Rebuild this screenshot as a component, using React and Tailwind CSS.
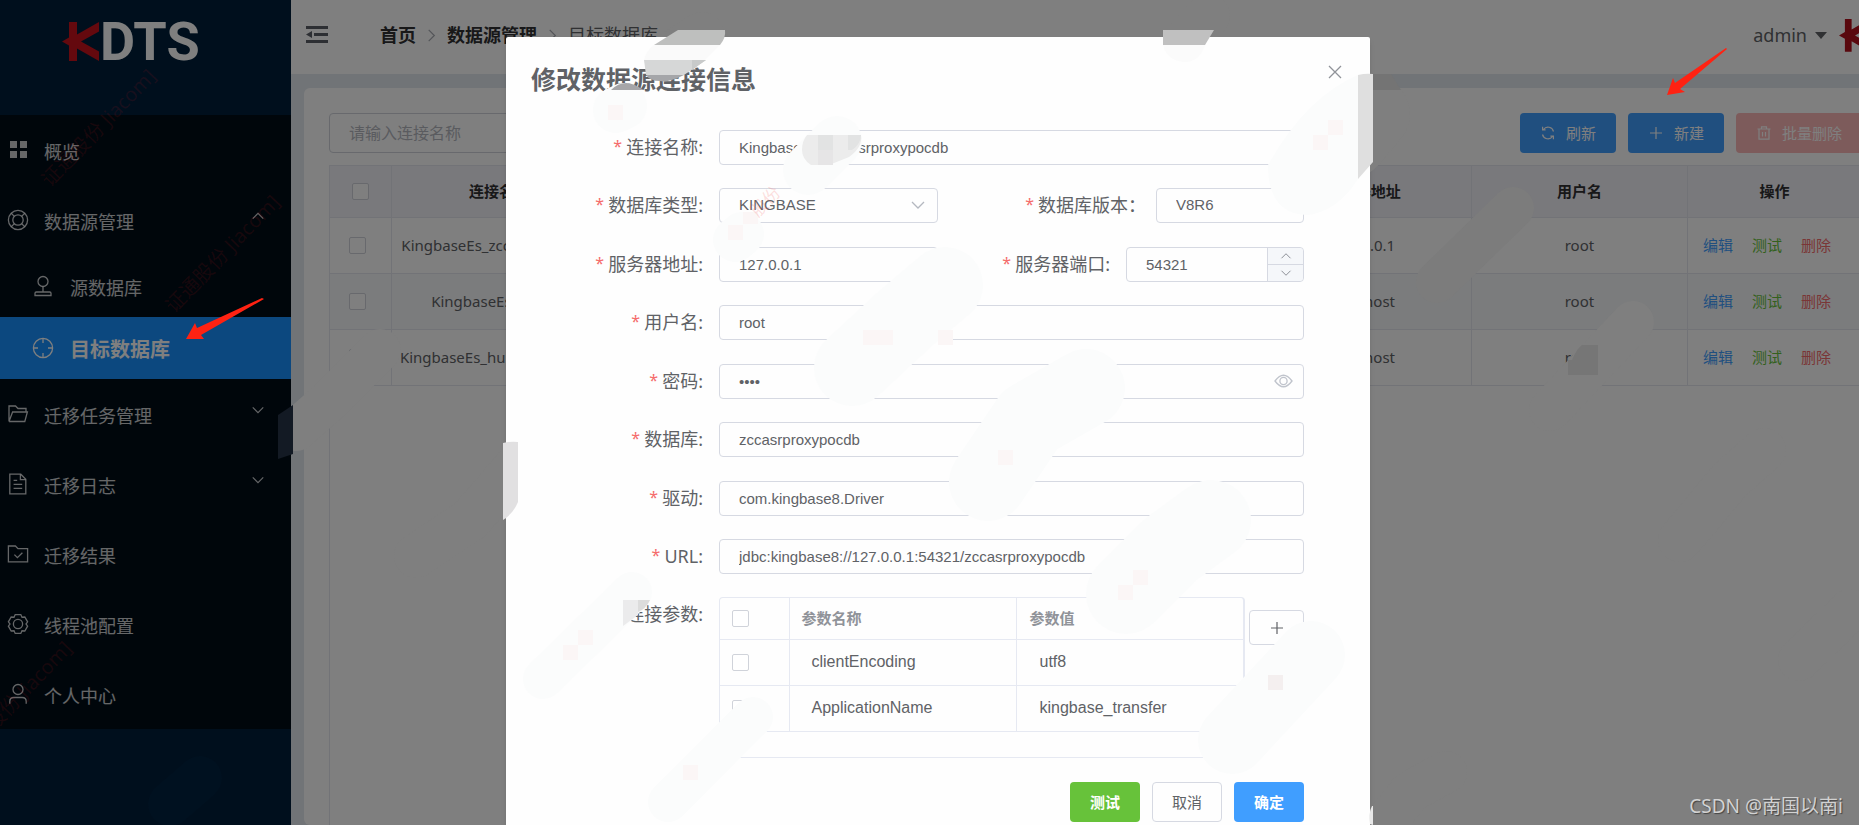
import React, { useState } from 'react';

const FONT_UI = 'font-["Noto_Sans","Noto_Sans_CJK_SC",sans-serif]';
const FONT_INPUT = 'font-["Liberation_Sans","Noto_Sans_CJK_SC",sans-serif]';

const MENU = [
  { label: '概览', icon: 'grid' },
  {
    label: '数据源管理',
    icon: 'buoy',
    arrow: 'up',
    children: [
      { label: '源数据库', icon: 'stamp' },
      { label: '目标数据库', icon: 'aim', active: true },
    ],
  },
  { label: '迁移任务管理', icon: 'folder', arrow: 'down' },
  { label: '迁移日志', icon: 'doc', arrow: 'down' },
  { label: '迁移结果', icon: 'check' },
  { label: '线程池配置', icon: 'gear' },
  { label: '个人中心', icon: 'user' },
];

const CONNECTIONS = [
  { name: 'KingbaseEs_zccasrproxypoc', host: '127.0.0.1', user: 'root' },
  { name: 'KingbaseEs_hr_test', host: 'localhost', user: 'root' },
  { name: 'KingbaseEs_hubproxypocdb', host: 'localhost', user: 'root' },
];

const PARAMS = [
  { name: 'clientEncoding', value: 'utf8' },
  { name: 'ApplicationName', value: 'kingbase_transfer' },
];

const ICON_SHAPES = {
  grid: (
    <g fill="currentColor" stroke="none">
      <rect x="3" y="2" width="7" height="7" />
      <rect x="13" y="2" width="7" height="7" />
      <rect x="3" y="12" width="7" height="7" />
      <rect x="13" y="12" width="7" height="7" />
    </g>
  ),
  buoy: (
    <>
      <circle cx="11" cy="11" r="9.6" />
      <circle cx="11" cy="11" r="5.2" />
      <path d="M4.2 4.2 7.4 7.4M17.8 4.2 14.6 7.4M4.2 17.8 7.4 14.6M17.8 17.8 14.6 14.6" />
    </>
  ),
  stamp: (
    <>
      <circle cx="11" cy="6.5" r="5" />
      <path d="M11 11.5V17M3 20.5v-2.2q0-1.3 1.3-1.3h13.4q1.3 0 1.3 1.3v2.2z" />
    </>
  ),
  aim: (
    <>
      <circle cx="11" cy="11" r="9.6" />
      <path d="M11 1.4V6M11 16v4.6M1.4 11H6M16 11h4.6" />
    </>
  ),
  folder: <path d="M2 18.500V3h6.500l2.500 2.500h8V9M2 18.500h15.800L20.400 9H5.600L2 18.500" />,
  doc: (
    <>
      <path d="M2.8 1.2h11l5 5v14.6h-16z" />
      <path d="M13.4 1.2V6.6h5.4M6.6 7.4h3.6M6.6 11.4h8.6M6.6 15.4h8.6" />
    </>
  ),
  check: (
    <>
      <path d="M1.4 3h7l2.6 2.6h9.6v13.2H1.4z" />
      <path d="m7.4 11.6 3 3 5-4.8" />
    </>
  ),
  gear: (
    <>
      <circle cx="11" cy="11" r="4.6" />
      <path d="M8.2 1.6h5.6l1.2 2.6 2.8-.2 2.8 4.8-1.6 2.2 1.6 2.2-2.8 4.8-2.8-.2-1.200 2.600H8.200L7 17.800l-2.800.2-2.800-4.800L3 11 1.400 8.800 4.200 4l2.800.2z" />
    </>
  ),
  user: (
    <>
      <circle cx="11" cy="6.5" r="5" />
      <path d="M2.8 20.8v-2.3q0-4 4-4h8.4q4 0 4 4v2.3" />
    </>
  ),
};

function MenuIcon({ name }) {
  return (
    <svg className="size-[22px] shrink-0" viewBox="0 0 22 22" fill="none" stroke="currentColor" strokeWidth="1.3">
      {ICON_SHAPES[name]}
    </svg>
  );
}

function Chevron({ className, dir = 'down' }) {
  const d = { down: 'm2 5 6 6 6-6', up: 'm2 11 6-6 6 6', right: 'm5 2 6 6-6 6' }[dir];
  return (
    <svg className={className} viewBox="0 0 16 16" fill="none" stroke="currentColor" strokeWidth="1.3">
      <path d={d} />
    </svg>
  );
}

function KMark({ className }) {
  return (
    <svg className={className} viewBox="0 0 38 40" fill="currentColor">
      <path d="M7 1h8v12.500L37 1v9.500L19 20.500 37 30.500v9.500L15 27.500V40H7V24.500L0 20.500 7 16.500z" />
    </svg>
  );
}

function Sidebar() {
  return (
    <aside className="w-[291px] shrink-0 bg-[#001f3a]">
      <div className="flex h-[115px] items-start pt-[15px] pl-[62px]">
        <KMark className="mt-[6px] h-[40px] w-[38px] text-[#c8121c]" />
        <span className="font-[Roboto,sans-serif] text-[54px] leading-[54px] font-bold text-white">DTS</span>
      </div>
      <nav className="bg-[#000c17] text-[18px] text-white/80">
        {MENU.map((item) => (
          <div key={item.label}>
            <a href="#" className="flex h-[70px] items-center pr-[26px] pl-[7px]">
              <MenuIcon name={item.icon} />
              <span className="ml-[15px] flex-1 pt-1">{item.label}</span>
              {item.arrow && <Chevron dir={item.arrow} className="mb-2 size-[14px]" />}
            </a>
            {item.children?.map((child) => (
              <a
                key={child.label}
                href="#"
                className={
                  child.active
                    ? 'flex h-[62px] items-center bg-[#1890ff] pl-[32px] text-[20px] font-bold text-white'
                    : 'flex h-[62px] items-center pl-[32px]'
                }
              >
                <MenuIcon name={child.icon} />
                <span className="ml-[16px] pt-1">{child.label}</span>
              </a>
            ))}
          </div>
        ))}
      </nav>
    </aside>
  );
}

function Header() {
  return (
    <header className="flex h-[74px] items-center bg-white pr-4 pb-1 pl-[15px] text-[18px] text-[#303133]">
      <button aria-label="收起菜单" className="text-[#5a5e66]">
        <svg className="h-[18px] w-[22px]" viewBox="0 0 22 18" fill="currentColor">
          <path d="M0 0h22v3H0zM8 7h14v3H8zM0 14h22v3H0zM0 8.500 6 5v7z" />
        </svg>
      </button>
      <nav className="ml-[52px] flex items-center">
        <a href="#" className="font-bold">首页</a>
        <Chevron dir="right" className="mx-2 size-[15px] text-[#a8abb2]" />
        <a href="#" className="font-bold">数据源管理</a>
        <Chevron dir="right" className="mx-2 size-[15px] text-[#a8abb2]" />
        <span className="text-[#606266]">目标数据库</span>
      </nav>
      <button className="ml-auto flex items-center gap-2 text-[#606266]">
        admin
        <svg className="h-[7px] w-[12px]" viewBox="0 0 12 7" fill="currentColor">
          <path d="M0 0h12L6 7z" />
        </svg>
      </button>
      <KMark className="ml-3 h-[34px] w-[32px] text-[#b3101c]" />
    </header>
  );
}

const tableCheck = 'block size-[17px] appearance-none rounded-[2px] border border-[#d0d3da] bg-white';

function ConnectionTable() {
  return (
    <table className="w-full table-fixed border-collapse text-center text-[15px] text-[#606266]">
      <colgroup>
        <col className="w-[61px]" />
        <col span="6" />
        <col className="w-[174px]" />
      </colgroup>
      <thead>
        <tr className="h-[52px] border-y border-[#e4e7ee] bg-[#f2f2f8] text-[#303133]">
          <th className="border-r border-[#e4e7ee]">
            <input type="checkbox" aria-label="全选" className={`${tableCheck} mx-auto`} />
          </th>
          {['连接名称', '数据库类型', '数据库版本', '数据库', '服务器地址', '用户名', '操作'].map((h) => (
            <th key={h} className="border-r border-[#e4e7ee] font-bold">{h}</th>
          ))}
        </tr>
      </thead>
      <tbody>
        {CONNECTIONS.map((row) => (
          <tr key={row.name} className="h-[56px] border-b border-[#e4e7ee] even:bg-[#f7f8fa]">
            <td className="border-r border-[#e4e7ee]">
              <input type="checkbox" aria-label={row.name} className={`${tableCheck} ml-[19px]`} />
            </td>
            <td className="truncate border-r border-[#e4e7ee]">{row.name}</td>
            <td className="border-r border-[#e4e7ee]">KINGBASE</td>
            <td className="border-r border-[#e4e7ee]">V8R6</td>
            <td className="border-r border-[#e4e7ee]">test</td>
            <td className="border-r border-[#e4e7ee]">{row.host}</td>
            <td className="border-r border-[#e4e7ee]">{row.user}</td>
            <td className="pl-[15px]">
              <div className="flex gap-[19px]">
                <button className="text-[#409eff]">编辑</button>
                <button className="text-[#67c23a]">测试</button>
                <button className="text-[#f56c6c]">删除</button>
              </div>
            </td>
          </tr>
        ))}
      </tbody>
    </table>
  );
}

function ConnectionPage() {
  return (
    <section className="mt-[14px] ml-[13px] flex flex-1 flex-col rounded-md bg-white p-[25px] pb-0">
      <div className="flex items-center gap-3 text-[15px] text-white">
        <input
          aria-label="连接名称"
          placeholder="请输入连接名称"
          className="mr-auto h-[40px] w-[300px] rounded border border-[#d0d3da] px-[19px] text-[16px] placeholder:text-[#b4b7be]"
        />
        <button className="flex h-[40px] items-center rounded bg-[#409eff] px-[20px]">
          <svg className="mr-[10px] size-4" viewBox="0 0 16 16" fill="none" stroke="currentColor" strokeWidth="1.2">
            <path d="M2.500 9.500a5.600 5.600 0 0 0 10 2M13.500 6.500a5.600 5.600 0 0 0-10-2M5.600 4.800h-3v-3M10.400 11.200h3v3" />
          </svg>
          刷新
        </button>
        <button className="flex h-[40px] items-center rounded bg-[#409eff] px-[20px]">
          <svg className="mr-[10px] size-4" viewBox="0 0 16 16" fill="none" stroke="currentColor" strokeWidth="1.2">
            <path d="M8 2v12M2 8h12" />
          </svg>
          新建
        </button>
        <button className="flex h-[40px] items-center rounded bg-[#fab6b6] px-[20px]">
          <svg className="mr-[10px] size-4" viewBox="0 0 16 16" fill="none" stroke="currentColor" strokeWidth="1.2">
            <path d="M1.500 4h13M5.500 4V1.800h5V4M3 4v10.200h10V4M6.500 7v4.500M9.500 7v4.500" />
          </svg>
          批量删除
        </button>
      </div>
      <div className="mt-3 flex-1 border-l border-[#e4e7ee]">
        <ConnectionTable />
      </div>
    </section>
  );
}

function Label({ htmlFor, required = true, className = '', children }) {
  return (
    <label htmlFor={htmlFor} className={`flex shrink-0 justify-end gap-1 text-[18px] leading-[35px] ${className}`}>
      {required && <span className="text-[16px] leading-[32px] text-[#f56c6c]">*</span>}
      <span>{children}</span>
    </label>
  );
}

const fieldBox = `h-[35px] w-full rounded border border-[#d6d9e2] bg-[#fefefe] px-[19px] text-[15px] text-[#606266] outline-none ${FONT_INPUT}`;

function TextRow({ id, label, value, type = 'text', suffix }) {
  return (
    <div className="flex gap-4">
      <Label htmlFor={id} className="w-[172px]">{label}</Label>
      <div className="relative flex-1">
        <input id={id} type={type} defaultValue={value} className={fieldBox} />
        {suffix}
      </div>
    </div>
  );
}

function EditDialog() {
  const [port, setPort] = useState(54321);

  return (
    <div
      role="dialog"
      aria-label="修改数据源连接信息"
      className="mt-[37px] h-fit w-[864px] shrink-0 rounded-t-[2px] bg-[#fefefe] pr-[66px] pb-10 pl-[25px] text-[#606266] shadow-md"
    >
      <div className="relative -mr-[40px] flex items-start justify-between pt-[24px]">
        <h2 className="text-[25px] leading-[36px] font-bold">修改数据源连接信息</h2>
        <button aria-label="关闭" className="mt-[4px] mr-[2px] text-[#909399]">
          <svg className="size-[14px]" viewBox="0 0 14 14" fill="none" stroke="currentColor" strokeWidth="1.3">
            <path d="m1 1 12 12M13 1 1 13" />
          </svg>
        </button>
      </div>

      <form className="mt-[33px] space-y-6" onSubmit={(e) => e.preventDefault()}>
        <div className="space-y-[23px]">
          <TextRow id="name" label="连接名称:" value="KingbaseEs_zccasrproxypocdb" />
          <div className="flex gap-4">
            <Label htmlFor="type" className="w-[172px]">数据库类型:</Label>
            <div className="relative w-[219px]">
              <select id="type" className={`${fieldBox} appearance-none`}>
                <option>KINGBASE</option>
              </select>
              <Chevron className="pointer-events-none absolute top-[9px] right-[12px] size-4 text-[#b4b8c0]" />
            </div>
            <Label htmlFor="version" className="ml-auto">数据库版本：</Label>
            <div className="-ml-[6px] w-[148px]">
              <select id="version" className={`${fieldBox} appearance-none`}>
                <option>V8R6</option>
              </select>
            </div>
          </div>
        </div>

        <div className="space-y-[23px]">
          <div className="flex gap-4">
            <Label htmlFor="host" className="w-[172px]">服务器地址:</Label>
            <div className="w-[219px]">
              <input id="host" defaultValue="127.0.0.1" className={fieldBox} />
            </div>
            <Label htmlFor="port" className="ml-auto">服务器端口:</Label>
            <div className="relative w-[178px]">
              <input id="port" value={port} onChange={(e) => setPort(Number(e.target.value))} className={fieldBox} />
              <div className="absolute inset-y-px right-px flex w-[36px] flex-col divide-y divide-[#d6d9e2] rounded-r border-l border-[#d6d9e2] bg-[#f5f7fa] text-[#8a8d94]">
                <button type="button" aria-label="增加" className="flex flex-1 items-center justify-center" onClick={() => setPort(port + 1)}>
                  <Chevron dir="up" className="size-3" />
                </button>
                <button type="button" aria-label="减少" className="flex flex-1 items-center justify-center" onClick={() => setPort(port - 1)}>
                  <Chevron className="size-3" />
                </button>
              </div>
            </div>
          </div>
          <TextRow id="user" label="用户名:" value="root" />
        </div>

        <div className="space-y-[23px]">
          <TextRow
            id="password"
            label="密码:"
            type="password"
            value="root"
            suffix={
              <button type="button" aria-label="显示密码" className="absolute top-[9px] right-[11px] text-[#c0c4cc]">
                <svg className="h-4 w-[19px]" viewBox="0 0 19 16" fill="none" stroke="currentColor" strokeWidth="1.3">
                  <path d="M1 8q8.500-11.500 17 0-8.500 11.500-17 0z" />
                  <circle cx="9.5" cy="8" r="3.6" />
                </svg>
              </button>
            }
          />
          <TextRow id="database" label="数据库:" value="zccasrproxypocdb" />
        </div>

        <div className="space-y-[23px]">
          <TextRow id="driver" label="驱动:" value="com.kingbase8.Driver" />
          <TextRow id="url" label="URL:" value="jdbc:kingbase8://127.0.0.1:54321/zccasrproxypocdb" />
          <div className="flex gap-4">
            <Label htmlFor="params" required={false} className="w-[172px]">连接参数:</Label>
            <div className="h-[161px] w-[526px] rounded border border-r-2 border-[#e6e9f2]">
              <table id="params" className="w-full table-fixed border-collapse text-left">
                <colgroup>
                  <col className="w-[69px]" />
                  <col />
                  <col />
                </colgroup>
                <thead>
                  <tr className="h-[41px] border-b border-[#e6e9f2] text-[15px] text-[#909399]">
                    <th className="border-r border-[#e6e9f2] pl-[12px]">
                      <input type="checkbox" aria-label="全选参数" className={tableCheck} />
                    </th>
                    <th className="border-r border-[#e6e9f2] pl-[12px] font-bold">参数名称</th>
                    <th className="pl-[13px] font-bold">参数值</th>
                  </tr>
                </thead>
                <tbody className={`text-[16px] ${FONT_INPUT}`}>
                  {PARAMS.map((p) => (
                    <tr key={p.name} className="h-[46px] border-b border-[#e6e9f2]">
                      <td className="border-r border-[#e6e9f2] pl-[12px]">
                        <input type="checkbox" aria-label={p.name} className={tableCheck} />
                      </td>
                      <td className="border-r border-[#e6e9f2] pl-[22px]">{p.name}</td>
                      <td className="pl-[23px]">{p.value}</td>
                    </tr>
                  ))}
                </tbody>
              </table>
            </div>
            <button
              type="button"
              aria-label="添加参数"
              className="mt-[13px] -ml-3 flex h-[35px] w-[55px] items-center justify-center rounded border border-[#d6d9e2]"
            >
              <svg className="size-[14px]" viewBox="0 0 14 14" fill="none" stroke="currentColor" strokeWidth="1.2">
                <path d="M7 1v12M1 7h12" />
              </svg>
            </button>
          </div>
        </div>

        <div className="flex justify-end gap-3 text-[15px]">
          <button type="button" className="h-[40px] w-[70px] rounded bg-[#67c23a] font-bold text-white">测试</button>
          <button type="button" className="h-[40px] w-[70px] rounded border border-[#d6d9e2]">取消</button>
          <button type="submit" className="h-[40px] w-[70px] rounded bg-[#409eff] font-bold text-white">确定</button>
        </div>
      </form>
    </div>
  );
}

// Brushed-out mosaic strokes: each one is a thick rounded line
function Strokes() {
  return (
    <g fill="none" strokeLinecap="round" strokeLinejoin="round">
      <clipPath id="behind-dialog">
        <path d="M291 0H506V825H291zM506 0H1370V37H506zM1370 0H1859V825H1370z" />
      </clipPath>
      <g stroke="#7f7f7f" clipPath="url(#behind-dialog)">
        <path strokeWidth="42" d="M380 350 328 402 296 430" />
        <path strokeWidth="44" d="M520 462 470 520 416 556" />
        <path strokeWidth="42" d="M1633 322 1550 410" />
        <path strokeWidth="44" d="M1764 450 1730 480 1680 540" />
        <path strokeWidth="42" d="M1850 610 1799 660" />
        <path strokeWidth="42" d="M1446 772 1410 792 1385 824" />
        <path strokeWidth="44" d="M1208 16 1186 40" />
        <path strokeWidth="44" d="M702 34 668 56" />
        <path strokeWidth="76" d="M1372 114 1350 140" />
        <path stroke="#7c7c7c" strokeWidth="42" d="M1513 208 1437 282" />
      </g>
      <path stroke="#001120" strokeWidth="44" d="M200 778 170 804" />
      <g stroke="#fbfcfc">
        <path strokeWidth="76" d="M945 285 906 318 852 368" />
        <path strokeWidth="78" d="M1086 388 1030 420 988 482" />
        <path strokeWidth="80" d="M1211 520 1170 550 1126 594" />
        <path strokeWidth="68" d="M1311 655 1232 740" />
        <path strokeWidth="40" d="M632 592 543 679" />
        <path strokeWidth="40" d="M753 717 668 802" />
        <path strokeWidth="50" d="M837 141 808 170" />
        <path strokeWidth="44" d="M742 234 735 240" />
        <path strokeWidth="46" d="M624 106 616 110" />
      </g>
    </g>
  );
}

function Mosaic() {
  return (
    <>
      <path d="M1358 75q-52 22-90 90 0 50 40 50 30-4 50-36z" fill="#fbfcfc" />
      <path d="M1358 75q8-2 15-1v88l-15 17z" fill="#dfdfdf" />
      <path d="M1373 74h18l10 16h-28z" fill="#747474" />
      <path d="M678 30h47q1 8-5 15h-66z" fill="#bebfbe" />
      <path d="M654 45h66l-15 15h-61q2-9 10-15z" fill="#fafafa" />
      <path d="M644 60h62l-22 15h-38z" fill="#d6d7d7" />
      <path d="M692 60h14l-14 10z" fill="#c8caca" />
      <path d="M646 75h38q-16 8-24 6-10 0-14-6z" fill="#a5a6a9" />
      <path d="M611 90q14-14 32 0z" fill="#a6a5a8" />
      <path d="M1163 30h51l-9 15h-42z" fill="#c0c0c0" />
      <path d="M1163 45h42q-6 18-22 17-16-2-20-17z" fill="#fbfbfb" />
      <path d="M802 150q0-9 5-15h54q2 12-12 22l-20 8h-18q-9-6-9-15z" fill="#ececec" />
      <path d="M818 135h15v15h-15zM848 135h13q0 9-9 15h-4z" fill="#e2e3e3" />
      <path d="M818 150h15v15h-15z" fill="#e6e5e6" />
      <path d="M503 443q8-2 15-1v60q-5 12-15 18z" fill="#e1e0e1" />
      <path d="M278 415 293 405v49l-15 5z" fill="#131a24" />
      <path d="M623 600h15v15l-15 11z" fill="#ebebec" />
      <path d="M638 600h12q-4 9-12 12z" fill="#dcdcdc" />
      <path d="M1598 345h-16q-6 5-10 15h-4v15h30z" fill="#767676" />
      <path d="M1268 675h15v15h-15z" fill="#f4efef" />
      <g fill="#fbf6f6">
        <path d="M1328 120h15v15h-15zM1313 135h15v15h-15zM938 330h15v15h-15zM863 330h30v15h-30z" />
        <path d="M743 212h15v12h-15zM728 225h15v15h-15zM608 105h15v15h-15zM578 630h15v15h-15zM563 645h15v15h-15z" />
        <path d="M683 765h15v15h-15zM1133 570h15v15h-15zM1118 585h15v15h-15zM998 450h15v15h-15z" />
      </g>
      <path d="M1370 824q-2-10 2-18h1v19z" fill="#e8e8e8" />
    </>
  );
}

function Annotations() {
  return (
    <svg className="pointer-events-none absolute top-0 left-0 h-[825px] w-[1859px]" viewBox="0 0 1859 825">
      <g fill="#c01820" fillOpacity="0.12" fontSize="20" className={FONT_UI}>
        <text transform="translate(50 188) rotate(-46)">证通股份 Jiacom]</text>
        <text transform="translate(174 314) rotate(-46)">证通股份 Jiacom]</text>
        <text transform="translate(-20 746) rotate(-46)">通股份 Jiacom]</text>
      </g>
      <Strokes />
      <Mosaic />
      <text transform="translate(758 218) rotate(-46)" fill="#f56c6c" fillOpacity="0.22" fontSize="17" className={FONT_UI}>
        股份
      </text>
      <g fill="#ff2212">
        <path d="M186 339 195 323 197 328 262 298 264 299 201 335 204 339z" />
        <path d="M1667 95 1673 78 1675 83 1726 48 1727 49 1680 89 1685 92z" />
      </g>
    </svg>
  );
}

export default function App() {
  return (
    <div className={`relative flex h-screen overflow-hidden ${FONT_UI}`}>
      <Sidebar />
      <main className="flex min-w-[1596px] flex-1 flex-col bg-[#e3e8ee]">
        <Header />
        <ConnectionPage />
      </main>
      <div className="absolute inset-0 flex justify-center overflow-hidden bg-black/50 pl-[17px]">
        <EditDialog />
      </div>
      <Annotations />
      <p className="absolute right-4 bottom-[5px] text-[19px] leading-[28px] text-[#d2d2d2] [text-shadow:1px_1px_1px_#444]">
        CSDN @南国以南i
      </p>
    </div>
  );
}
